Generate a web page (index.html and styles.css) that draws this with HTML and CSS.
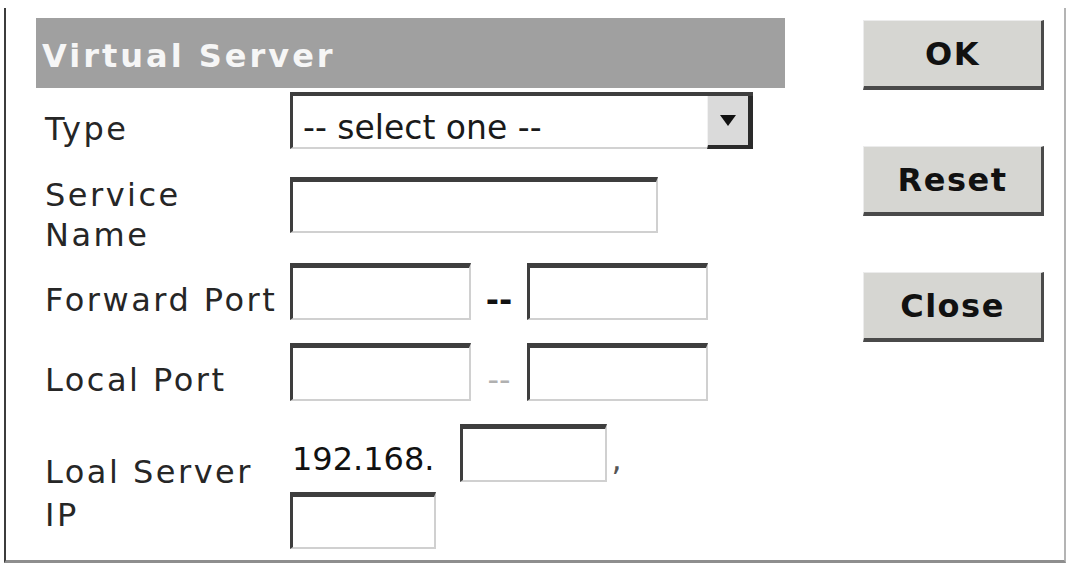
FILE: index.html
```html
<!DOCTYPE html>
<html lang="en">
<head>
    <meta charset="UTF-8">
    <meta name="viewport" content="width=device-width, initial-scale=1.0">
    <title>Virtual Server</title>
    <link rel="stylesheet" href="styles.css">
</head>
<body>

    <div class="frame">
        <form class="form">
            <div class="title">Virtual Server</div>

            <div class="row row-type">
                <label class="lbl">Type</label>
                <div class="select">
                    <span class="select-text">-- select one --</span>
                    <span class="arrow">
                        <svg width="16" height="11" viewBox="0 0 16 11"><polygon points="0,0 16,0 8,11" fill="#111"/></svg>
                    </span>
                </div>
            </div>

            <div class="row row-service">
                <label class="lbl lbl-two">Service<br>Name</label>
                <input type="text" class="field w-name">
            </div>

            <div class="row row-forward">
                <label class="lbl">Forward Port</label>
                <input type="text" class="field w-port">
                <span class="dash dash-bold">--</span>
                <input type="text" class="field w-port">
            </div>

            <div class="row row-local">
                <label class="lbl">Local Port</label>
                <input type="text" class="field w-port">
                <span class="dash dash-light">--</span>
                <input type="text" class="field w-port">
            </div>

            <div class="ip">
                <label class="lbl lbl-ip">Loal Server IP</label>
                <div class="ip-fields">
                    <div class="ip-line">
                        <span class="ip-prefix">192.168.</span>
                        <input type="text" class="field w-ip">
                        <span class="ip-dot">,</span>
                    </div>
                    <div class="ip-line ip-line2">
                        <input type="text" class="field w-ip2">
                    </div>
                </div>
            </div>
        </form>

        <div class="actions">
            <button type="button" class="btn">OK</button>
            <button type="button" class="btn">Reset</button>
            <button type="button" class="btn">Close</button>
        </div>
    </div>

</body>
</html>
```

FILE: styles.css
```css
body {
    margin: 0;
    background: #fff;
    font-family: "DejaVu Sans", Verdana, sans-serif;
    color: #262626;
}

.frame {
    box-sizing: border-box;
    width: 1062px;
    height: 555px;
    margin: 8px 0 0 4px;
    border-left: 2px solid #3c3c3c;
    border-right: 2px solid #b4b4b4;
    border-bottom: 3px solid #8e8e8e;
    display: flex;
}

.form {
    margin: 0;
    padding: 10px 0 0 30px;
    width: 749px;
}

.title {
    box-sizing: border-box;
    height: 70px;
    background: #a0a0a0;
    color: #f6f6f6;
    font-weight: bold;
    font-size: 32px;
    letter-spacing: 3px;
    padding: 6px 0 0 6px;
    display: flex;
    align-items: center;
}

.row {
    display: flex;
    align-items: center;
}

.lbl {
    box-sizing: border-box;
    width: 254px;
    flex-shrink: 0;
    padding: 16px 0 0 9px;
    font-size: 32px;
    line-height: 40px;
    letter-spacing: 2.5px;
}

.row-type { margin-top: 4px; height: 57px; }
.row-service { margin-top: 28px; height: 56px; }
.row-forward { margin-top: 30px; height: 57px; }
.row-local { margin-top: 23px; height: 58px; }

.lbl-two {
    padding-top: 20px;
}

.select {
    box-sizing: border-box;
    display: flex;
    width: 463px;
    height: 100%;
    border-top: 4px solid #3e3e3e;
    border-left: 3px solid #3e3e3e;
    border-bottom: 2px solid #d2d2d2;
    background: #fff;
}

.select-text {
    padding: 12px 0 0 10px;
    font-size: 33px;
    color: #1a1a1a;
    align-self: center;
}

.arrow {
    box-sizing: border-box;
    margin-left: auto;
    width: 46px;
    margin-bottom: -2px;
    background: #dadada;
    border-left: 1px solid #f2f2f2;
    border-right: 5px solid #2a2a2a;
    border-bottom: 4px solid #2a2a2a;
    display: flex;
    align-items: center;
    justify-content: center;
}

.field {
    box-sizing: border-box;
    height: 100%;
    margin: 0;
    padding: 0;
    border-style: solid;
    border-width: 5px 2px 2px 3px;
    border-color: #3e3e3e #d0d0d0 #d0d0d0 #3e3e3e;
    background: #fff;
}

.w-name { width: 368px; }
.w-port { width: 181px; }
.w-ip { width: 147px; }
.w-ip2 { width: 146px; }

.dash {
    width: 56px;
    text-align: center;
    padding-top: 16px;
    font-size: 32px;
}

.dash-bold {
    font-weight: bold;
    color: #111;
}

.dash-light {
    color: #b0b0b0;
}

.ip {
    display: flex;
    align-items: flex-start;
    margin-top: 23px;
}

.lbl-ip {
    padding-top: 27px;
    line-height: 43px;
    padding-right: 12px;
}

.ip-line {
    display: flex;
    align-items: center;
    height: 58px;
}

.ip-line2 {
    margin-top: 10px;
    height: 57px;
}

.ip-prefix {
    padding: 12px 25px 0 2px;
    font-size: 32px;
    color: #111;
}

.ip-dot {
    padding: 12px 0 0 5px;
    font-size: 32px;
    color: #555;
}

.actions {
    margin-left: 78px;
    padding-top: 12px;
    display: flex;
    flex-direction: column;
    gap: 56px;
}

.btn {
    box-sizing: border-box;
    width: 181px;
    height: 70px;
    background: #d6d6d2;
    color: #111;
    font-family: "DejaVu Sans", Verdana, sans-serif;
    font-weight: bold;
    font-size: 32px;
    letter-spacing: 1.5px;
    border-style: solid;
    border-width: 1px 3px 4px 1px;
    border-color: #ececec #4a4a4a #4a4a4a #ececec;
    padding: 0;
}
```
